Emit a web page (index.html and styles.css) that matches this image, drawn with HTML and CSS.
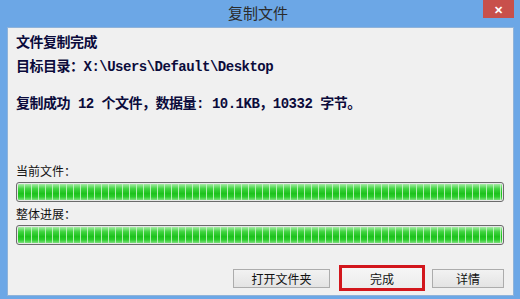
FILE: index.html
```html
<!DOCTYPE html>
<html lang="zh-CN">
<head>
    <meta charset="UTF-8">
    <title>复制文件</title>
    <link rel="stylesheet" href="styles.css">
</head>
<body>
    <div class="window">
        <div class="titlebar">
            <span class="title">复制文件</span>
            <span class="close">✕</span>
        </div>
        <div class="client">
            <div class="info first">文件复制完成</div>
            <div class="info">目标目录：X:\Users\Default\Desktop</div>
            <div class="info summary">复制成功 12 个文件，数据量: 10.1KB，10332 字节。</div>

            <div class="label first-label">当前文件：</div>
            <div class="progress"><div class="fill"></div></div>
            <div class="label">整体进展：</div>
            <div class="progress"><div class="fill"></div></div>

            <div class="buttons">
                <button class="btn open">打开文件夹</button>
                <button class="btn done">完成</button>
                <button class="btn details">详情</button>
            </div>
        </div>
    </div>
</body>
</html>
```

FILE: styles.css
```css
body {
    margin: 0;
    background: #6ca7e6;
    font-family: "Noto Sans CJK SC", sans-serif;
    width: 520px;
    height: 299px;
    overflow: hidden;
}
.window {
    display: flex;
    flex-direction: column;
    height: 299px;
}
.titlebar {
    position: relative;
    height: 27px;
    display: flex;
    justify-content: center;
    align-items: center;
}
.title {
    font-size: 15px;
    color: #2b2b2b;
    margin-top: -2px;
    margin-left: -4px;
}
.close {
    position: absolute;
    top: 0;
    right: 6px;
    width: 31px;
    height: 18px;
    background: #c8504b;
    color: #fff;
    font-size: 11px;
    font-weight: bold;
    display: flex;
    align-items: center;
    justify-content: center;
}
.client {
    flex: 1;
    margin: 0 6px 3px 7px;
    background: #f0f0f0;
    border: 1px solid #8fb3da;
    padding: 0 9px 0 8px;
    display: flex;
    flex-direction: column;
}
.info {
    font-family: "Liberation Mono", "Noto Sans CJK SC", monospace;
    font-weight: bold;
    font-size: 14px;
    line-height: 16px;
    color: #0b0b3b;
    margin-top: 8px;
    letter-spacing: -0.5px;
}
.info.first {
    margin-top: 7px;
}
.info.summary {
    margin-top: 21px;
}
.label {
    font-size: 12px;
    line-height: 16px;
    color: #111;
    margin-top: 4px;
}
.label.first-label {
    margin-top: 51px;
}
.progress {
    margin-top: 3px;
    height: 16px;
    border: 1px solid #6b6b6b;
    border-radius: 3px;
    background: #e8e8e8;
    padding: 1px;
}
.fill {
    height: 100%;
    border-radius: 1px;
    background:
        repeating-linear-gradient(90deg, transparent 0, transparent 6px, rgba(200, 245, 200, 0.85) 6px, rgba(200, 245, 200, 0.85) 7px),
        linear-gradient(#a6eca6 0%, #3fd33f 30%, #1cc21c 60%, #2ccd2c 80%, #7fe07f 100%);
}
.buttons {
    margin-top: 20px;
    display: flex;
    justify-content: flex-end;
    align-items: center;
}
.btn {
    font-family: "Noto Sans CJK SC", sans-serif;
    font-size: 12px;
    color: #111;
    height: 19px;
    padding: 0;
    border: 1px solid #acacac;
    background: linear-gradient(#f2f2f2, #e3e3e3);
    line-height: 15px;
}
.open {
    width: 97px;
}
.done {
    width: 86px;
    height: 26px;
    margin-left: 9px;
    border: 3px solid #d2161c;
    background: linear-gradient(#f6f6f6, #ececec);
}
.details {
    width: 72px;
    margin-left: 7px;
}
```
